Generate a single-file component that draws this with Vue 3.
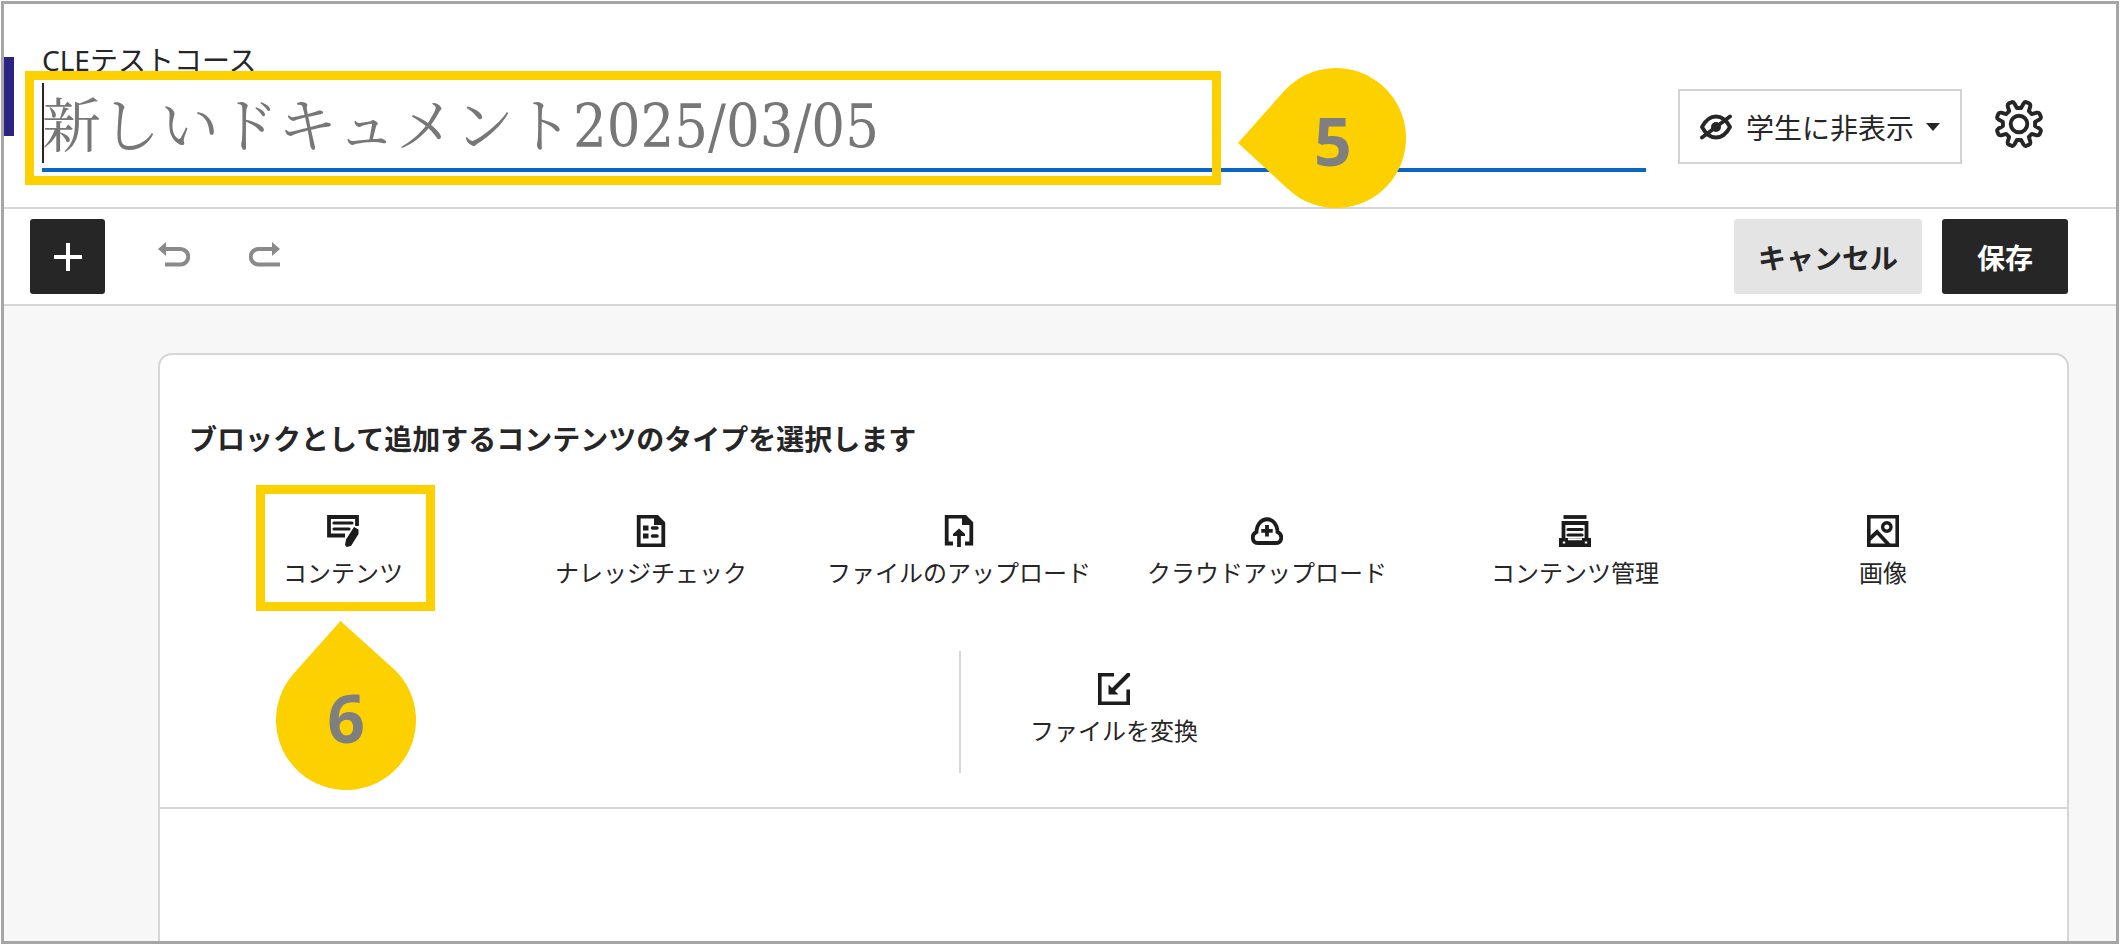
<template>
  <div class="page">
    <div class="frame">
      <header class="header">
        <span class="accent"></span>
        <div class="heading">
          <label class="course" for="doc-title">CLEテストコース</label>
          <div class="title-box">
            <input
              id="doc-title"
              v-model="title"
              class="title-input"
              type="text"
              placeholder="新しいドキュメント2025/03/05"
            />
            <span class="caret"></span>
            <span class="highlight highlight-title"></span>
            <div class="callout callout-title">
              <svg width="169" height="140" viewBox="0 0 169 140" aria-hidden="true">
                <path d="M0 75 L45.7 23.6 A70 70 0 1 1 50.6 121.6 Z" fill="#fdd000" />
              </svg>
              <span class="callout-number">5</span>
            </div>
          </div>
        </div>
        <div class="header-actions">
          <button type="button" class="visibility" aria-haspopup="menu">
            <svg width="32" height="26" viewBox="0 0 32 26" fill="none" stroke="#262626" aria-hidden="true">
              <path d="M2 13 C6 5.500 11 2.500 16 2.500 C21 2.500 26 5.500 30 13 C26 20.500 21 23.500 16 23.500 C11 23.500 6 20.500 2 13 Z" stroke-width="3.800" stroke-linejoin="round" />
              <circle cx="16" cy="13" r="5" fill="#262626" stroke="none" />
              <path d="M2 23.500 L30 2.500" stroke-width="3.800" stroke-linecap="round" />
            </svg>
            <span class="visibility-text">学生に非表示</span>
            <svg width="14" height="8" viewBox="0 0 14 8" aria-hidden="true">
              <path d="M0 0 H14 L7 8 Z" fill="#262626" />
            </svg>
          </button>
          <button type="button" class="settings" aria-label="設定">
            <svg width="50" height="50" viewBox="-25 -25 50 50" fill="none" stroke="#262626" stroke-width="3.900" stroke-linejoin="round" aria-hidden="true">
              <path :d="gearPath" />
              <circle r="8.300" />
            </svg>
          </button>
        </div>
      </header>

      <div class="toolbar">
        <button type="button" class="add" aria-label="追加">
          <svg width="28" height="28" viewBox="0 0 28 28" aria-hidden="true">
            <path d="M14 1 V27 M1 14 H27" stroke="#fff" stroke-width="4" stroke-linecap="round" />
          </svg>
        </button>
        <button type="button" class="history" aria-label="元に戻す">
          <svg width="32" height="26" viewBox="0 0 32 26" aria-hidden="true">
            <path d="M6 7 H22.500 A7.700 7.700 0 0 1 22.500 22.500 H7" fill="none" stroke="#8a8a8a" stroke-width="4" />
            <path d="M0 7 L8 0 V14 Z" fill="#8a8a8a" />
          </svg>
        </button>
        <button type="button" class="history" aria-label="やり直す">
          <svg width="32" height="26" viewBox="0 0 32 26" aria-hidden="true">
            <path d="M26 7 H9.500 A7.700 7.700 0 0 0 9.500 22.500 H31" fill="none" stroke="#8a8a8a" stroke-width="4" />
            <path d="M31 7 L23 0 V14 Z" fill="#8a8a8a" />
          </svg>
        </button>
        <div class="toolbar-actions">
          <button type="button" class="btn btn-cancel">キャンセル</button>
          <button type="button" class="btn btn-save">保存</button>
        </div>
      </div>

      <main class="content">
        <section class="card">
          <div class="picker">
            <h2 class="picker-title">ブロックとして追加するコンテンツのタイプを選択します</h2>
            <div v-for="(row, i) in rows" :key="i" class="row">
              <div v-for="item in row" :key="item.id" class="cell" :class="{ divided: i > 0 }">
                <button type="button" class="block">
                  <svg class="block-icon" viewBox="0 0 32 32" aria-hidden="true">
                    <path
                      v-for="(shape, n) in item.shapes"
                      :key="n"
                      :d="shape.d"
                      :fill="shape.fill || 'none'"
                      :stroke="shape.w ? shape.stroke || ink : 'none'"
                      :stroke-width="shape.w || 0"
                      :stroke-linecap="shape.cap || 'butt'"
                    />
                  </svg>
                  <span class="block-label">{{ item.label }}</span>
                </button>
                <template v-if="item.id === 'content'">
                  <span class="highlight highlight-block"></span>
                  <div class="callout callout-block">
                    <svg width="140" height="169" viewBox="0 0 140 169" aria-hidden="true">
                      <path d="M64.500 0 L116.700 46.900 A70 70 0 1 1 17.800 52.400 Z" fill="#fdd000" />
                    </svg>
                    <span class="callout-number">6</span>
                  </div>
                </template>
              </div>
            </div>
          </div>
        </section>
      </main>
    </div>
  </div>
</template>

<script setup>
import { ref } from 'vue';

const title = ref('');

const ink = '#1c1c1c';

// gear outline: 8 teeth, with a valley pointing straight up
const TEETH = 8;
const point = (radius, deg) => {
  const a = (deg * Math.PI) / 180;
  return `${(radius * Math.sin(a)).toFixed(2)} ${(-radius * Math.cos(a)).toFixed(2)}`;
};
const gearPath = Array.from({ length: TEETH }, (_, i) => {
  const mid = (i + 0.5) * (360 / TEETH);
  return [
    `${i === 0 ? 'M' : 'L'}${point(16.2, mid - 15)}`,
    `L${point(21, mid - 10)}`,
    `Q${point(23, mid - 8)} ${point(23, mid - 4)}`,
    `L${point(23, mid + 4)}`,
    `Q${point(23, mid + 8)} ${point(21, mid + 10)}`,
    `L${point(16.2, mid + 15)}`
  ].join(' ');
}).join(' ') + ' Z';

const rows = [
  [
    {
      id: 'content',
      label: 'コンテンツ',
      shapes: [
        { d: 'M18 20.5 H2 V2 H30 V11', w: 3.8 },
        { d: 'M7 8 H25 M7 14 H22', w: 3.2, cap: 'round' },
        { d: 'M27 12 L31.500 14.500 V19 L24 31 L19.500 32 L18 30 L19 24.500 Z', fill: ink }
      ]
    },
    {
      id: 'knowledge',
      label: 'ナレッジチェック',
      shapes: [
        { d: 'M3.700 1.700 H22 L28.300 8 V30.300 H3.700 Z', w: 3.8 },
        { d: 'M19 1 H23 L29 7 V10 H19 Z', fill: ink },
        { d: 'M8 10.500 H13.500 V15.500 H8 Z M8 18.500 H13.500 V23.500 H8 Z', fill: ink },
        { d: 'M17.500 13 H22 M17.500 21 H22', w: 3.5, cap: 'round' }
      ]
    },
    {
      id: 'file',
      label: 'ファイルのアップロード',
      shapes: [
        { d: 'M10 28.500 H3.700 V1.700 H22 L28.300 8 V28.500 H22', w: 3.8 },
        { d: 'M19 1 H23 L29 7 V10 H19 Z', fill: ink },
        { d: 'M16 32 V19', w: 3.8 },
        { d: 'M10 21 V19 L16 13.500 L22 19 V21 Z', fill: ink }
      ]
    },
    {
      id: 'cloud',
      label: 'クラウドアップロード',
      shapes: [
        { d: 'M7.500 28 C0.500 28 0 19.500 5.500 17 C6 0 26 0 26.500 17 C32 19.500 31.500 28 24.500 28 Z', w: 3.8 },
        { d: 'M16 10 V21.500 M10.300 15.800 H21.700', w: 3.8 }
      ]
    },
    {
      id: 'manage',
      label: 'コンテンツ管理',
      shapes: [
        { d: 'M4.500 2 H27.500', w: 3.8 },
        { d: 'M4.500 23 V8 H27.500 V23', w: 3.8 },
        { d: 'M9 14.500 H23 M9 20 H23', w: 3.2, cap: 'round' },
        { d: 'M0 23 H32 V32 H0 Z', fill: ink },
        { d: 'M9 24.200 H23 M3.800 27.500 H6.200 M25.800 27.500 H28.200', w: 2, stroke: '#fff' }
      ]
    },
    {
      id: 'image',
      label: '画像',
      shapes: [
        { d: 'M1.700 1.700 H30.300 V30.300 H1.700 Z', w: 3.8 },
        { d: 'M15.600 12 A4.200 4.200 0 1 0 24 12 A4.200 4.200 0 1 0 15.600 12 Z', w: 3.4 },
        { d: 'M2 24.500 L10 17 L22 30', w: 3.8 }
      ]
    }
  ],
  [
    {
      id: 'convert',
      label: 'ファイルを変換',
      shapes: [
        { d: 'M16 1.700 H1.700 V30.300 H30.300 V16.500', w: 3.8 },
        { d: 'M30.500 1.500 L14 18', w: 4, cap: 'round' },
        { d: 'M10.500 11.500 L20.500 21.500 H10.500 Z', fill: ink }
      ]
    }
  ]
];
</script>

<style>
body {
  margin: 0;
  background: #fff;
}
</style>

<style scoped>
.page,
.page * {
  box-sizing: border-box;
}

.page {
  display: flex;
  min-height: 100vh;
  padding: 1px;
  color: #262626;
  font-family: "Noto Sans", "Noto Sans CJK JP", sans-serif;
  font-size: 28px;
}

.frame {
  flex: 1;
  min-width: 0;
  display: flex;
  flex-direction: column;
  border: 3px solid #a6a6a6;
  background: #fff;
}

button {
  padding: 0;
  border: 0;
  background: none;
  color: inherit;
  font: inherit;
  cursor: pointer;
}

svg {
  display: block;
  flex: none;
}

.header {
  position: relative;
  display: flex;
  align-items: flex-end;
  gap: 32px;
  padding: 38px 72px 35px 38px;
  border-bottom: 2px solid #d6d6d6;
}

.accent {
  position: absolute;
  left: 0;
  top: 53px;
  width: 10px;
  height: 79px;
  background: #2b2483;
}

.heading {
  flex: 1;
  min-width: 0;
}

.course {
  display: block;
  line-height: 36px;
}

.title-box {
  position: relative;
}

.title-input {
  display: block;
  width: 100%;
  height: 94px;
  padding: 6px 0 0;
  border: 0;
  border-bottom: 4px solid #0a66c2;
  outline: none;
  background: transparent;
  color: #262626;
  font-family: "DejaVu Serif Condensed", "Noto Serif CJK JP", "Noto Sans CJK JP", serif;
  font-size: 59px;
}

.title-input::placeholder {
  color: #777;
  opacity: 1;
}

.caret {
  position: absolute;
  left: 0;
  top: 5px;
  width: 2px;
  height: 80px;
  background: #262626;
}

.highlight {
  position: absolute;
  border: 9px solid #fdd000;
  pointer-events: none;
}

.highlight-title {
  left: -17px;
  top: -7px;
  width: 1196px;
  height: 114px;
}

.highlight-block {
  left: 67px;
  top: -8px;
  width: 179px;
  height: 126px;
}

.callout {
  position: absolute;
  z-index: 1;
}

.callout-title {
  left: 1196px;
  top: -10px;
}

.callout-block {
  left: 87px;
  top: 128px;
}

.callout-number {
  position: absolute;
  right: 0;
  bottom: 0;
  width: 140px;
  color: #7f7f7f;
  font-size: 66px;
  font-weight: 700;
  line-height: 140px;
  text-align: center;
}

.callout-title .callout-number {
  right: 4px;
  bottom: -2px;
}

.callout-block .callout-number {
  bottom: 3px;
}

.header-actions {
  display: flex;
  align-items: flex-start;
  gap: 32px;
  margin-bottom: 8px;
}

.visibility {
  display: flex;
  align-items: center;
  height: 75px;
  padding: 0 20px;
  border: 2px solid #d3d3d3;
}

.visibility-text {
  margin: 0 12px 0 14px;
}

.settings {
  display: flex;
  align-items: center;
  height: 70px;
}

.toolbar {
  display: flex;
  align-items: center;
  padding: 10px 48px 10px 26px;
  border-bottom: 2px solid #d6d6d6;
}

.add {
  display: flex;
  align-items: center;
  justify-content: center;
  width: 75px;
  height: 75px;
  margin-right: 53px;
  border-radius: 3px;
  background: #262626;
}

.history {
  margin-right: 59px;
  padding-bottom: 4px;
}

.toolbar-actions {
  display: flex;
  gap: 20px;
  margin-left: auto;
}

.btn {
  height: 75px;
  padding: 0 24px;
  border-radius: 3px;
  font-weight: 700;
}

.btn-cancel {
  background: #e4e4e4;
}

.btn-save {
  padding: 0 35px;
  background: #262626;
  color: #fff;
}

.content {
  flex: 1;
  display: flex;
  padding: 47px 47px 0 154px;
  background: #f7f7f7;
}

.card {
  flex: 1;
  min-width: 0;
  border: 2px solid #d6d6d6;
  border-bottom: 0;
  border-radius: 14px 14px 0 0;
  background: #fff;
}

.picker {
  padding: 63px 30px 34px 29px;
  border-bottom: 2px solid #d6d6d6;
}

.picker-title {
  margin: 0 0 33px;
  font-size: 28px;
  font-weight: 700;
  line-height: 42px;
}

.row {
  display: flex;
  justify-content: center;
}

.row + .row {
  margin-top: 36px;
}

.cell {
  position: relative;
  flex: 0 0 calc(100% / 6);
  height: 122px;
}

.cell.divided {
  border-left: 2px solid #d6d6d6;
}

.block {
  display: flex;
  flex-direction: column;
  align-items: center;
  gap: 10px;
  width: 100%;
  height: 100%;
  padding-top: 22px;
}

.block-icon {
  width: 32px;
  height: 32px;
}

.block-label {
  font-size: 24px;
  line-height: 32px;
  white-space: nowrap;
}
</style>
